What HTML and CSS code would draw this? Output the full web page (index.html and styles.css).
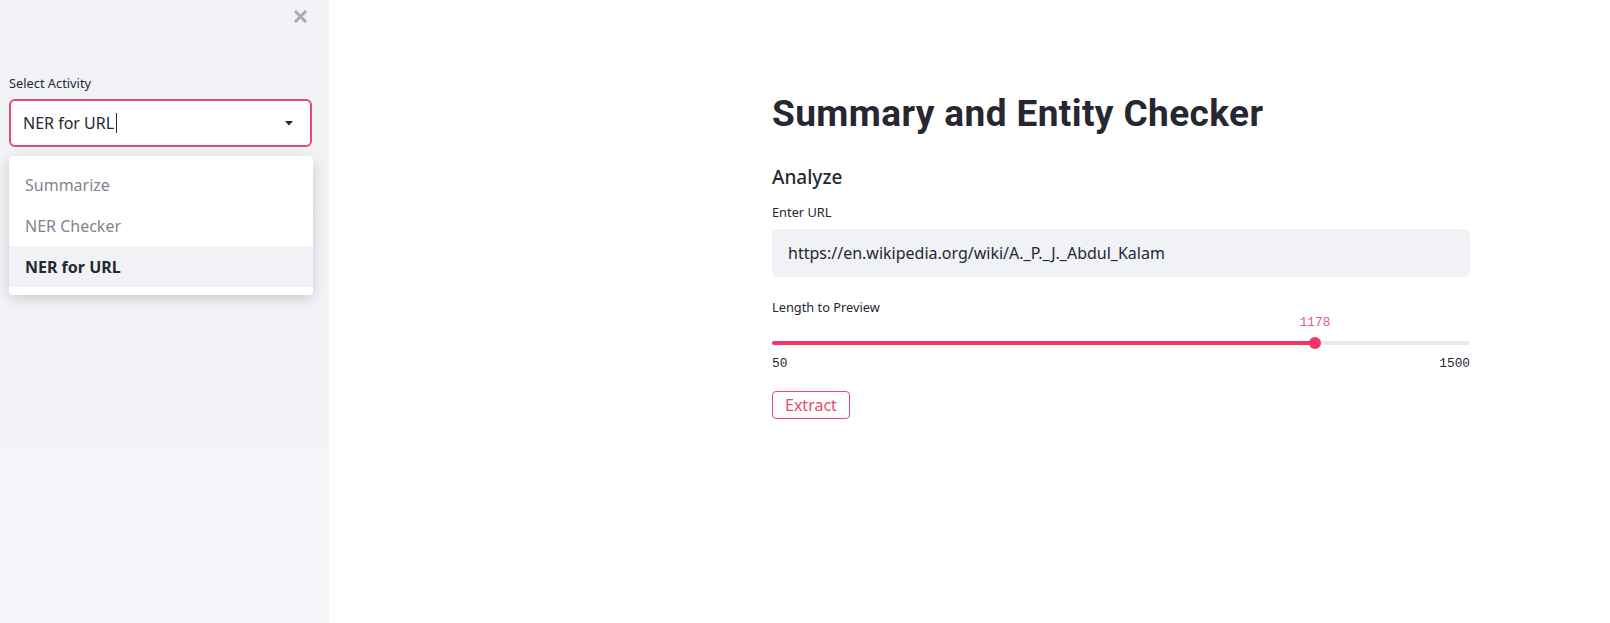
FILE: index.html
```html
<!DOCTYPE html>
<html>
<head>
<meta charset="utf-8">
<link rel="stylesheet" href="styles.css">
</head>
<body>
<aside class="sidebar">
  <div class="close-row">
    <svg class="close" width="13" height="13" viewBox="0 0 13 13"><path d="M2 2 L11 11 M11 2 L2 11" stroke="#a6aab3" stroke-width="3" stroke-linecap="square"/></svg>
  </div>
  <label class="label side-label">Select Activity</label>
  <div class="select">
    <span class="select-value">NER for URL</span><span class="cursor"></span>
    <svg class="arrow" width="8" height="5" viewBox="0 0 8 5"><path d="M0 0 H8 L4 4.5 Z" fill="#262730"/></svg>
  </div>
  <ul class="menu">
    <li class="menu-item">Summarize</li>
    <li class="menu-item">NER Checker</li>
    <li class="menu-item active">NER for URL</li>
  </ul>
</aside>
<main class="main">
  <div class="content">
    <h1 class="title">Summary and Entity Checker</h1>
    <h3 class="subtitle">Analyze</h3>
    <label class="label">Enter URL</label>
    <div class="input">https://en.wikipedia.org/wiki/A._P._J._Abdul_Kalam</div>
    <label class="label slider-label">Length to Preview</label>
    <div class="slider">
      <div class="track">
        <div class="fill" style="width: 77.8%">
          <span class="thumb"></span>
          <span class="value">1178</span>
        </div>
      </div>
      <div class="ticks"><span>50</span><span>1500</span></div>
    </div>
    <button class="button">Extract</button>
  </div>
</main>
</body>
</html>
```
FILE: styles.css
```css
html, body {
  margin: 0;
  padding: 0;
  height: 100%;
}
body {
  display: flex;
  font-family: "Noto Sans", "Liberation Sans", sans-serif;
  color: #262730;
  background: #ffffff;
}
.sidebar {
  position: relative;
  flex: none;
  width: 329px;
  height: 100vh;
  box-sizing: border-box;
  padding: 10px 17px 0 9px;
  background: linear-gradient(180deg, #f0f2f6 0%, #f4f5f8 100%);
  display: flex;
  flex-direction: column;
}
.close-row {
  display: flex;
  justify-content: flex-end;
  padding-right: 5px;
  height: 14px;
}
.label {
  display: block;
  font-size: 12.8px;
  line-height: 16px;
  color: #262730;
}
.side-label {
  margin-top: 51px;
  margin-bottom: 8px;
}
.select {
  height: 48px;
  box-sizing: border-box;
  border: 2px solid #e94a72;
  border-radius: 6px;
  background: #fff;
  display: flex;
  align-items: center;
  padding: 0 17px 0 12px;
}
.select-value {
  font-size: 16px;
}
.cursor {
  display: inline-block;
  width: 1px;
  height: 20px;
  background: #262730;
  margin-left: 2px;
}
.arrow {
  margin-left: auto;
}
.menu {
  position: absolute;
  top: 156px;
  left: 9px;
  width: 304px;
  margin: 0;
  padding: 8px 0;
  list-style: none;
  background: #fff;
  border-radius: 4px;
  box-shadow: 0 4px 14px rgba(0, 0, 0, 0.16);
}
.menu-item {
  height: 41px;
  display: flex;
  align-items: center;
  padding-left: 16px;
  font-size: 16px;
  color: #82858f;
}
.menu-item.active {
  background: #f0f2f6;
  color: #262730;
  font-weight: 700;
}
.main {
  flex: 1;
  padding-left: 443px;
}
.content {
  width: 698px;
  display: flex;
  flex-direction: column;
  align-items: flex-start;
}
.title {
  margin: 91px 0 0;
  font-family: Roboto, "Noto Sans", sans-serif;
  font-size: 37px;
  line-height: 46px;
  font-weight: 700;
  letter-spacing: 0.4px;
}
.subtitle {
  margin: 27px 0 0;
  font-size: 19px;
  line-height: 26px;
  font-weight: 500;
}
.content > .label {
  margin-top: 14px;
}
.input {
  margin-top: 9px;
  width: 100%;
  height: 48px;
  box-sizing: border-box;
  background: #f0f2f6;
  border-radius: 6px;
  display: flex;
  align-items: center;
  padding-left: 16px;
  font-size: 16px;
}
.content > .slider-label {
  margin-top: 22px;
}
.slider {
  width: 100%;
  margin-top: 26px;
}
.track {
  height: 4px;
  background: #e6eaf1;
  border-radius: 2px;
}
.fill {
  position: relative;
  height: 4px;
  background: #f63366;
  border-radius: 2px;
}
.thumb {
  position: absolute;
  right: -6px;
  top: -4px;
  width: 12px;
  height: 12px;
  border-radius: 50%;
  background: #f63366;
}
.value {
  position: absolute;
  right: -16px;
  top: -26px;
  width: 32px;
  text-align: center;
  font-family: "Liberation Mono", "DejaVu Sans Mono", monospace;
  font-size: 12.8px;
  line-height: 16px;
  color: #f0557c;
}
.ticks {
  display: flex;
  justify-content: space-between;
  margin-top: 11px;
  font-family: "Liberation Mono", "DejaVu Sans Mono", monospace;
  font-size: 12.8px;
  line-height: 16px;
}
.button {
  margin-top: 19px;
  height: 28px;
  padding: 0 12px;
  background: #fff;
  border: 1px solid #e94a72;
  border-radius: 4px;
  color: #e94a72;
  font-family: "Noto Sans", "Liberation Sans", sans-serif;
  font-size: 16px;
  line-height: 26px;
}
```
